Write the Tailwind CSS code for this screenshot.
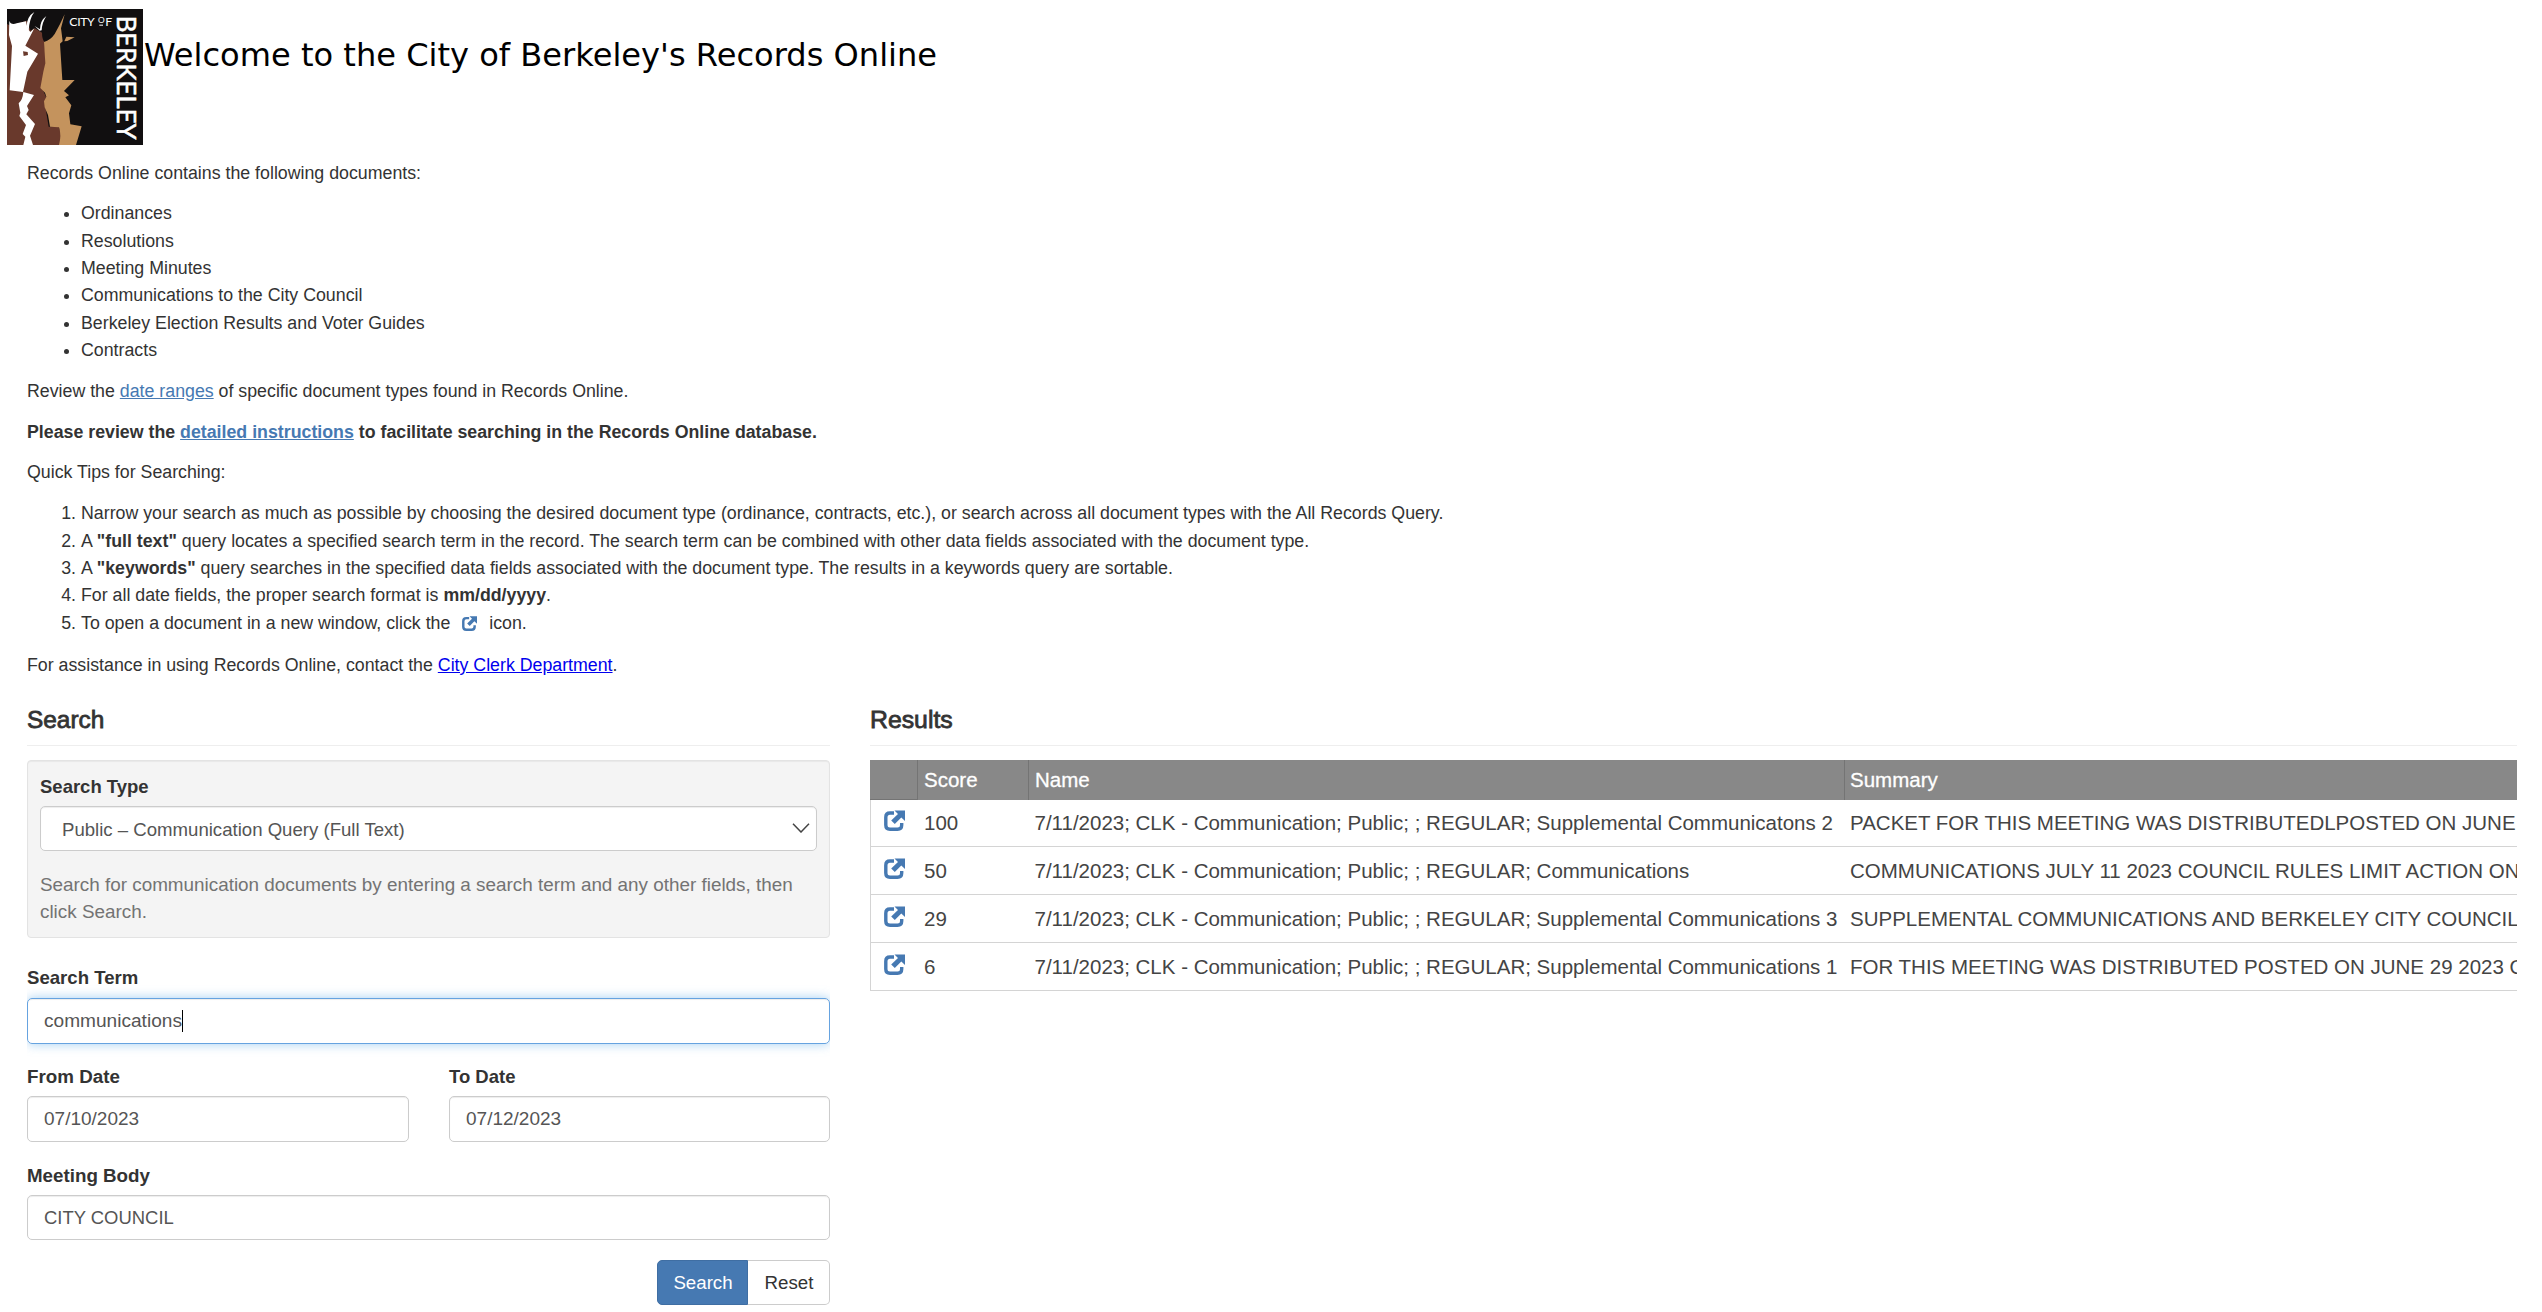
<!DOCTYPE html>
<html lang="en">
<head>
<meta charset="utf-8">
<title>City of Berkeley Records Online</title>
<script src="https://cdn.jsdelivr.net/npm/@tailwindcss/browser@4"></script>
</head>
<body class="bg-white text-[#333] font-['Liberation_Sans',Arial,sans-serif] h-[1312px] overflow-hidden">
<svg class="hidden">
  <symbol id="ext" viewBox="0 0 21 21">
    <path d="M10 3H6Q1.8 3 1.8 7.200V15Q1.800 19.200 6 19.200H13.500Q17.700 19.200 17.700 15V13" fill="none" stroke="#4679b2" stroke-width="3.400"/>
    <path d="M10.500 0.500H21V11L17.300 7.500L10.800 14L7.200 10.400L14 4Z" fill="#4679b2"/>
  </symbol>
</svg>

<header class="flex items-start pt-[9px] pl-[7px] h-[145px]">
  <svg class="w-[136px] h-[136px] shrink-0" viewBox="21 27 408 408">
    <rect x="21" y="27" width="408" height="408" fill="#110f10"/>
    <path fill="#69392c" d="M21 435V72Q30 78 40 74L80 62L92 92L104 85Q118 92 126 98Q126 116 133 126L138 190L126 265L138 290L136 320L146 380L176 380L184 405L180 435Z"/>
    <path fill="#c4935d" d="M132 126Q152 120 164 102L179 74L194 43L183 85L188 124L180 131L187 240L224 240L192 273L207 286L196 292L214 316L207 340L211 373L245 379L228 435H177Q185 405 177 382L150 380L144 345L134 322L132 304L139 290L135 278L121 264L130 215L136 190Z"/>
    <path fill="#c4935d" d="M193 124L199 110L224 112L202 123Z"/>
    <path fill="#fff" d="M28 62Q32 76 50 70L78 64Q80 84 91 96L103 85L76 137L114 161L82 215L69 276L29 271L36 138L27 105Z"/>
    <path fill="#fff" d="M70 276L102 285L81 318L86 330L79 343L105 372L90 407L99 435H70L76 410L68 402L78 375L58 348L61 338L56 310Q68 300 70 276Z"/>
    <path fill="#69392c" d="M69 154L83 156L84 165L71 168Z"/>
    <path fill="#fff" d="M80 80Q80 50 103 36Q88 56 86 92ZM120 88Q120 62 139 48Q126 68 125 91L119 92L104 78Z"/>
    <text x="208" y="77" font-family="Lato" font-size="37" fill="#fff" textLength="76">CITY</text>
    <text x="294" y="70" font-family="Lato" font-size="25" fill="#fff">O</text>
    <rect x="298" y="74" width="11" height="3" fill="#fff"/>
    <text x="316" y="77" font-family="Lato" font-size="37" fill="#fff">F</text>
    <text transform="translate(352 47) rotate(90)" font-family="Lato" font-weight="400" font-size="80" fill="#fff" stroke="#fff" stroke-width="1.500" textLength="372" lengthAdjust="spacingAndGlyphs">BERKELEY</text>
  </svg>
  <h1 class="text-black text-[32.080px] leading-[40px] pt-[26px] pl-px whitespace-nowrap font-['DejaVu_Sans',Verdana,sans-serif]">Welcome to the City of Berkeley's Records Online</h1>
</header>

<section class="mt-[14.500px] ml-[27px] text-[17.780px] leading-[27.400px] whitespace-nowrap">
  <p class="mb-[13.200px]">Records Online contains the following documents:</p>
  <ul class="list-disc pl-[54px] mb-[13.500px]">
    <li>Ordinances</li>
    <li>Resolutions</li>
    <li>Meeting Minutes</li>
    <li>Communications to the City Council</li>
    <li>Berkeley Election Results and Voter Guides</li>
    <li>Contracts</li>
  </ul>
  <p class="mb-[13.400px]">Review the <a class="text-[#4679b2] underline">date ranges</a> of specific document types found in Records Online.</p>
  <p class="mb-[13.200px] font-bold">Please review the <a class="text-[#4679b2] underline">detailed instructions</a> to facilitate searching in the Records Online database.</p>
  <p class="mb-[13.400px]">Quick Tips for Searching:</p>
  <ol class="list-decimal pl-[54px] mb-[14.500px]">
    <li>Narrow your search as much as possible by choosing the desired document type (ordinance, contracts, etc.), or search across all document types with the All Records Query.</li>
    <li>A <b>"full text"</b> query locates a specified search term in the record. The search term can be combined with other data fields associated with the document type.</li>
    <li>A <b>"keywords"</b> query searches in the specified data fields associated with the document type. The results in a keywords query are sortable.</li>
    <li>For all date fields, the proper search format is <b>mm/dd/yyyy</b>.</li>
    <li>To open a document in a new window, click the <svg class="inline w-[15px] h-[15px] ml-[7px] mr-[7px] -mt-px align-middle"><use href="#ext"/></svg> icon.</li>
  </ol>
  <p>For assistance in using Records Online, contact the <a class="text-[#0000ee] underline">City Clerk Department</a>.</p>
</section>

<main class="flex items-start mt-[23px] pl-[27px] gap-10">
  <section class="w-[803px] shrink-0 text-[18.667px]">
    <h2 class="h-[44px] border-b border-[#eee] text-[24.400px] leading-[36px] [-webkit-text-stroke:0.800px_#333]">Search</h2>
    <div class="mt-[14px] h-[178px] border border-[#e3e3e3] rounded-[4px] bg-[#f4f4f4] px-[12px] shadow-[inset_0_1px_1px_rgba(0,0,0,0.05)]">
      <label class="block font-bold text-[18.500px] leading-[27px] pt-[12px]">Search Type</label>
      <div class="mt-[6px] h-[45px] flex items-center justify-between border border-[#ccc] rounded-[5px] bg-white pl-[21px] pr-[6px] text-[#555] shadow-[inset_0_1px_1px_rgba(0,0,0,0.075)]">
        <span class="text-[18.600px] pt-[2px]">Public – Communication Query (Full Text)</span>
        <svg class="w-[18px] h-[10px] -mt-[2px]" viewBox="0 0 18 10"><path d="M1 0.800L9 9L17 0.800" fill="none" stroke="#444" stroke-width="1.500"/></svg>
      </div>
      <p class="mt-[20px] leading-[27px] text-[#737373] text-[18.870px] whitespace-nowrap">Search for communication documents by entering a search term and any other fields, then<br>click Search.</p>
    </div>
    <label class="block mt-[26px] font-bold text-[18.600px] leading-[27px]">Search Term</label>
    <div class="mt-[7px] h-[46px] flex items-center border border-[#66a3e0] rounded-[5px] px-4 text-[#555] shadow-[inset_0_1px_1px_rgba(0,0,0,0.075),0_0_11px_rgba(102,175,233,0.6)] [clip-path:inset(-16px_0px)]">
      <span class="text-[19.100px]">communications</span><span class="w-px h-[22px] bg-black"></span>
    </div>
    <div class="mt-[19px] grid grid-cols-[382px_381px] gap-x-10">
      <div>
        <label class="block font-bold text-[18.800px] leading-[27px]">From Date</label>
        <div class="mt-[6px] h-[46px] flex items-center border border-[#ccc] rounded-[5px] px-4 text-[#555] text-[19px] shadow-[inset_0_1px_1px_rgba(0,0,0,0.075)]">07/10/2023</div>
      </div>
      <div>
        <label class="block font-bold text-[18.500px] leading-[27px]">To Date</label>
        <div class="mt-[6px] h-[46px] flex items-center border border-[#ccc] rounded-[5px] px-4 text-[#555] text-[19px] shadow-[inset_0_1px_1px_rgba(0,0,0,0.075)]">07/12/2023</div>
      </div>
    </div>
    <label class="block mt-[20px] font-bold text-[18.760px] leading-[27px]">Meeting Body</label>
    <div class="mt-[6px] h-[45px] flex items-center border border-[#ccc] rounded-[5px] px-4 text-[#555] text-[18.450px] shadow-[inset_0_1px_1px_rgba(0,0,0,0.075)]">CITY COUNCIL</div>
    <div class="mt-[20px] flex justify-end h-[45px] text-[18.700px]">
      <button class="w-[91px] rounded-l-[5px] border border-[#3f6ea3] bg-[#4679b2] text-white pl-px">Search</button>
      <button class="w-[82px] rounded-r-[5px] border border-l-0 border-[#ccc] bg-white pl-px">Reset</button>
    </div>
  </section>

  <section class="w-[1647px] shrink-0">
    <h2 class="h-[44px] border-b border-[#eee] text-[24.800px] leading-[36px] [-webkit-text-stroke:0.800px_#333]">Results</h2>
    <div class="mt-[14px] w-[1647px] overflow-hidden whitespace-nowrap text-[20.500px] text-[#444]">
      <div class="grid grid-cols-[48px_111px_816px_1fr] h-10 leading-[40px] bg-[#888] text-white [-webkit-text-stroke:0.300px_#fff]">
        <span class="border-r border-b border-[#747474]"></span>
        <span class="border-r border-[#747474] pl-[6px]">Score</span>
        <span class="border-r border-[#747474] pl-[6px]">Name</span>
        <span class="pl-[5px]">Summary</span>
      </div>
      <div class="grid grid-cols-[47px_111px_816px_672px] h-[47px] leading-[46px] border-b border-l border-[#d4d4d4]">
        <span class="pl-[13px] pt-[10px]"><svg class="w-[21px] h-[21px]"><use href="#ext"/></svg></span><span class="pl-[6px]">100</span><span class="pl-[5.500px]">7/11/2023; CLK - Communication; Public; ; REGULAR; Supplemental Communicatons 2</span><span class="pl-[5px] overflow-hidden">PACKET FOR THIS MEETING WAS DISTRIBUTEDLPOSTED ON JUNE</span>
      </div>
      <div class="grid grid-cols-[47px_111px_816px_672px] h-[48px] leading-[48px] border-b border-l border-[#d4d4d4]">
        <span class="pl-[13px] pt-[11px]"><svg class="w-[21px] h-[21px]"><use href="#ext"/></svg></span><span class="pl-[6px]">50</span><span class="pl-[5.500px]">7/11/2023; CLK - Communication; Public; ; REGULAR; Communications</span><span class="pl-[5px] overflow-hidden">COMMUNICATIONS JULY 11 2023 COUNCIL RULES LIMIT ACTION ON</span>
      </div>
      <div class="grid grid-cols-[47px_111px_816px_672px] h-[48px] leading-[48px] border-b border-l border-[#d4d4d4]">
        <span class="pl-[13px] pt-[11px]"><svg class="w-[21px] h-[21px]"><use href="#ext"/></svg></span><span class="pl-[6px]">29</span><span class="pl-[5.500px]">7/11/2023; CLK - Communication; Public; ; REGULAR; Supplemental Communications 3</span><span class="pl-[5px] overflow-hidden">SUPPLEMENTAL COMMUNICATIONS AND BERKELEY CITY COUNCIL</span>
      </div>
      <div class="grid grid-cols-[47px_111px_816px_672px] h-[48px] leading-[48px] border-b border-l border-[#d4d4d4]">
        <span class="pl-[13px] pt-[11px]"><svg class="w-[21px] h-[21px]"><use href="#ext"/></svg></span><span class="pl-[6px]">6</span><span class="pl-[5.500px]">7/11/2023; CLK - Communication; Public; ; REGULAR; Supplemental Communications 1</span><span class="pl-[5px] overflow-hidden">FOR THIS MEETING WAS DISTRIBUTED POSTED ON JUNE 29 2023 O</span>
      </div>
    </div>
  </section>
</main>
</body>
</html>
